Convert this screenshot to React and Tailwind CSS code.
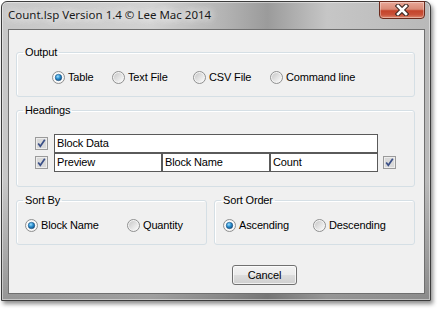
import React from "react";

const ui = "font-['Liberation_Sans',Arial,sans-serif] text-[11px] leading-[13px] tracking-[-0.15px] text-black";

function Radio({ on }) {
  return (
    <svg width="13" height="13" viewBox="0 0 13 13" className="shrink-0">
      <defs>
        <linearGradient id="rbg" x1="0" y1="0" x2="1" y2="1">
          <stop offset="0" stopColor="#c8c8c8" />
          <stop offset="1" stopColor="#fbfbfb" />
        </linearGradient>
        <radialGradient id="rdot" cx="0.4" cy="0.35" r="0.75">
          <stop offset="0" stopColor="#9fe0ff" />
          <stop offset="0.45" stopColor="#2a8fd0" />
          <stop offset="1" stopColor="#0b3f6e" />
        </radialGradient>
      </defs>
      <circle cx="6.5" cy="6.5" r="6" fill="#f4f4f4" stroke="#8e8f8f" />
      <circle cx="6.5" cy="6.5" r="4.6" fill={on ? "#ffffff" : "url(#rbg)"} />
      {on && <circle cx="6.5" cy="6.5" r="3.3" fill="url(#rdot)" stroke="#1d4d78" strokeWidth="0.5" />}
    </svg>
  );
}

function Check() {
  return (
    <svg width="13" height="13" viewBox="0 0 13 13" className="shrink-0">
      <rect x="0.5" y="0.5" width="12" height="12" fill="#e6e6e6" stroke="#9a9a9a" />
      <rect x="1.5" y="1.5" width="10" height="10" fill="#d9d9d9" stroke="#ededed" />
      <path d="M3.2 6.6 L5.3 9.3 L9.8 2.8" stroke="#3a4f87" strokeWidth="1.7" fill="none" />
    </svg>
  );
}

function Option({ on, label, w }) {
  return (
    <div className={`flex items-center gap-[3px] ${w}`}>
      <Radio on={on} />
      <span>{label}</span>
    </div>
  );
}

function Group({ title, className, children }) {
  return (
    <fieldset className={`border border-[#d5dfe5] rounded-[3px] shadow-[inset_1px_1px_0_#fff] p-0 m-0 ${className}`}>
      <legend className="ml-[6px] px-[2px] leading-[13px]">{title}</legend>
      {children}
    </fieldset>
  );
}

function Cell({ text, w }) {
  return (
    <div className={`h-[19px] ${w} border border-[#5a5a5a] bg-white pl-[2px] flex items-center`}>
      {text}
    </div>
  );
}

export default function App() {
  return (
    <div className="w-[442px] h-[312px] bg-white p-[1px]">
      <div className="w-[430px] h-[300px] rounded-t-[6px] border border-[#3c3c3c] flex flex-col bg-[linear-gradient(180deg,rgba(0,0,0,0)_0%,rgba(0,0,0,0)_60%,rgba(0,0,0,0.25)_100%),linear-gradient(90deg,#c7c7c7_0%,#d2d2d2_35%,#b3b3b3_52%,#9b9b9b_62%,#c6c6c6_76%,#b9b9b9_100%)] shadow-[inset_0_0_0_1px_rgba(255,255,255,0.45),2px_3px_4px_rgba(0,0,0,0.45)]">
        {/* title bar */}
        <div className="h-[27px] flex justify-between items-start">
          <span className="pl-[6px] pt-[5px] font-['Noto_Sans',sans-serif] text-[11.5px] leading-[16px] text-[#1a1a1a] [text-shadow:0_0_8px_#fff,0_0_8px_#fff]">
            Count.lsp Version 1.4 © Lee Mac 2014
          </span>
          <div className="-mt-[1px] mr-[5px] w-[46px] h-[18px] rounded-b-[4px] border border-[#6b2a1c] bg-[linear-gradient(180deg,#e9a797_0%,#d98a76_45%,#c4432a_55%,#c9523a_80%,#de8a6f_100%)] shadow-[inset_0_0_0_1px_rgba(255,255,255,0.35)] flex items-center justify-center">
            <svg width="14" height="12" viewBox="0 0 14 12">
              <path d="M3 2 L11 10 M11 2 L3 10" stroke="#3a2520" strokeWidth="4.6" strokeLinecap="square" />
              <path d="M3 2 L11 10 M11 2 L3 10" stroke="#ffffff" strokeWidth="2.6" strokeLinecap="square" />
            </svg>
          </div>
        </div>

        {/* client area */}
        <div className={`ml-[6px] w-[417px] h-[265px] border border-[#6f6f6f] bg-[#f0f0f0] pl-[7px] pt-[16px] flex flex-col ${ui}`}>
          <Group title="Output" className="w-[399px]">
            <div className="pt-[12px] pb-[12px] pl-[35px] flex items-center">
              <Option on label="Table" w="w-[60px]" />
              <Option label="Text File" w="w-[81px]" />
              <Option label="CSV File" w="w-[77px]" />
              <Option label="Command line" />
            </div>
          </Group>

          <Group title="Headings" className="w-[399px] mt-[7px]">
            <div className="pt-[17px] pb-[14px] pl-[18px] flex flex-col">
              <div className="flex items-center gap-[6px]">
                <Check />
                <Cell text="Block Data" w="w-[324px]" />
              </div>
              <div className="flex items-center gap-[6px]">
                <Check />
                <div className="flex">
                  <Cell text="Preview" w="w-[108px]" />
                  <Cell text="Block Name" w="w-[108px]" />
                  <Cell text="Count" w="w-[108px]" />
                </div>
                <div className="-ml-[1px]">
                  <Check />
                </div>
              </div>
            </div>
          </Group>

          <div className="flex gap-[7px] mt-[7px]">
            <Group title="Sort By" className="w-[191px]">
              <div className="pt-[12px] pb-[12px] pl-[8px] flex items-center">
                <Option on label="Block Name" w="w-[102px]" />
                <Option label="Quantity" />
              </div>
            </Group>
            <Group title="Sort Order" className="w-[201px]">
              <div className="pt-[12px] pb-[12px] pl-[8px] flex items-center">
                <Option on label="Ascending" w="w-[90px]" />
                <Option label="Descending" />
              </div>
            </Group>
          </div>

          <button className="mt-[20px] ml-[216px] w-[65px] h-[20px] rounded-[3px] border border-[#707070] bg-[linear-gradient(180deg,#f2f2f2_0%,#ebebeb_50%,#dddddd_51%,#cfcfcf_100%)] shadow-[inset_0_0_0_1px_rgba(255,255,255,0.7)] flex items-center justify-center">
            Cancel
          </button>
        </div>
      </div>
    </div>
  );
}
